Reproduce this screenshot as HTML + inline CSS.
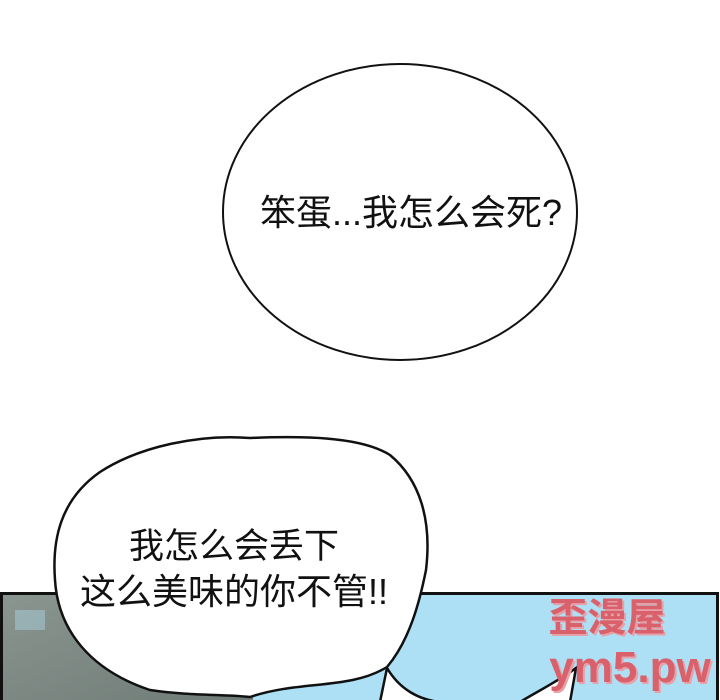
<!DOCTYPE html>
<html><head><meta charset="utf-8"><style>
html,body{margin:0;padding:0;background:#fff;}
body{width:720px;height:700px;overflow:hidden;position:relative;font-family:"Liberation Sans","Noto Sans CJK SC",sans-serif;}
svg{position:absolute;left:0;top:0;}
</style></head><body>
<svg width="720" height="700" viewBox="0 0 720 700">
<defs>
<linearGradient id="tree" x1="0" y1="0" x2="1" y2="1">
<stop offset="0" stop-color="#8a9590"/><stop offset="1" stop-color="#6f7b76"/>
</linearGradient>
</defs>
<rect x="1.5" y="593.5" width="716" height="110" fill="#ade0f4" stroke="#111" stroke-width="3"/>
<rect x="3" y="595" width="250" height="105" fill="url(#tree)"/>
<rect x="15" y="610" width="30" height="20" fill="#a9cfdc" opacity=".5"/>
<path d="M387 668 C400 690 420 700 440 702 L520 702 C540 690 560 680 576 668 L570 702 L380 702 Z" fill="#fff" stroke="#111" stroke-width="2.5"/>
<path d="M250 697 C300 680 350 690 387 667 C410 640 420 600 426 570 C432 520 420 480 390 455 C360 436 300 436 250 438 C200 434 140 446 100 472 C60 500 52 540 55 580 C58 630 90 670 150 690 C190 696 225 694 250 697 Z" fill="#fff" stroke="#111" stroke-width="2.5"/>
<ellipse cx="400" cy="212" rx="177" ry="148" fill="#fff" stroke="#111" stroke-width="2"/>
<text x="411" y="225" font-size="36" text-anchor="middle" fill="#111" font-family="Liberation Sans, Noto Sans CJK SC, sans-serif">笨蛋...我怎么会死?</text>
<text x="234" y="558" font-size="35" text-anchor="middle" fill="#111" font-family="Liberation Sans, Noto Sans CJK SC, sans-serif">我怎么会丢下</text>
<text x="234" y="604" font-size="36" text-anchor="middle" fill="#111" font-family="Liberation Sans, Noto Sans CJK SC, sans-serif">这么美味的你不管!!</text>
<g font-family="Liberation Sans, Noto Sans CJK SC, sans-serif" font-weight="bold">
<text x="609" y="633" font-size="39" text-anchor="middle" fill="#e8a0a8">歪漫屋</text>
<text x="607" y="631" font-size="39" text-anchor="middle" fill="#d9616b">歪漫屋</text>
<text x="632" y="684" font-size="44" text-anchor="middle" fill="#e8a0a8">ym5.pw</text>
<text x="630" y="682" font-size="44" text-anchor="middle" fill="#d9616b">ym5.pw</text>
</g>
</svg>
</body></html>
